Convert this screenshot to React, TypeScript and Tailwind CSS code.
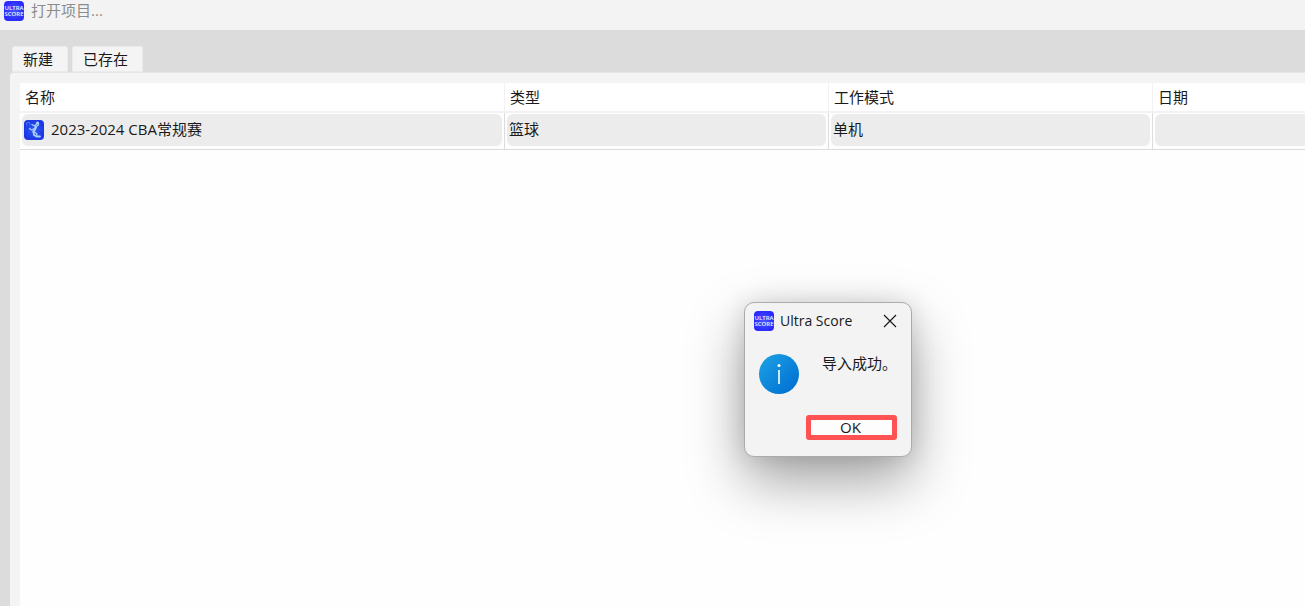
import React from 'react';

const columns = [
  { title: '名称', width: 'w-[485px]' },
  { title: '类型', width: 'w-[324px]' },
  { title: '工作模式', width: 'w-[324px]' },
  { title: '日期', width: '' },
];

const projects = [
  { name: '2023-2024 CBA常规赛', type: '篮球', mode: '单机', date: '' },
];

const AppLogo = () => (
  <svg viewBox="0 0 20 20" className="size-5 shrink-0" aria-hidden="true">
    <defs>
      <radialGradient id="logo-fill">
        <stop offset="0" stopColor="#4a55fa" />
        <stop offset="1" stopColor="#2b2bff" />
      </radialGradient>
    </defs>
    <rect width="20" height="20" rx="4" fill="url(#logo-fill)" />
    <g fill="#f1f2ff" fontFamily="Open Sans, sans-serif" fontWeight="600" fontSize="6" textAnchor="middle">
      <text x="10" y="9">ULTRA</text>
      <text x="10" y="15">SCORE</text>
    </g>
  </svg>
);

const BasketballIcon = () => (
  <svg viewBox="0 0 20 20" className="size-5 shrink-0" aria-hidden="true">
    <defs>
      <radialGradient id="ball-fill">
        <stop offset="0" stopColor="#2c5cf0" />
        <stop offset="1" stopColor="#1c38e4" />
      </radialGradient>
    </defs>
    <rect width="20" height="20" rx="4" fill="url(#ball-fill)" />
    <g fill="none" stroke="#a9cdfb" strokeLinecap="round" strokeLinejoin="round">
      <path d="M2.5 5V3L5 2l1 2.5" stroke="#5d86f6" strokeWidth="0.8" />
      <path d="m8 4.5 2.5 1.5 2-2" strokeWidth="1.2" />
      <path d="M12 6.5 11 9l-1.5 2.5" strokeWidth="2.4" />
      <path d="M10.5 8.5 7.5 10l-2-1.500" strokeWidth="1.2" />
      <path d="m9.5 12 .5 3 2.5 1.5H16" strokeWidth="1.8" />
      <path d="m10.5 12 2.5 2-.5 2" strokeWidth="1.2" />
      <path d="m13 6 1.5-1V3" strokeWidth="1.2" />
    </g>
    <circle cx="13.5" cy="3" r="1.6" fill="#a9cdfb" />
  </svg>
);

const InfoIcon = () => (
  <svg viewBox="0 0 40 40" className="size-10 shrink-0" aria-hidden="true">
    <defs>
      <linearGradient id="info-fill" x1="0" y1="0" x2="1" y2="1">
        <stop offset="0.1" stopColor="#1b9de2" />
        <stop offset="0.9" stopColor="#0071d3" />
      </linearGradient>
    </defs>
    <circle cx="20" cy="20" r="20" fill="url(#info-fill)" />
    <circle cx="20" cy="11.5" r="1.5" fill="#fff" />
    <path d="M20 16v14" stroke="#fff" strokeWidth="1.6" />
  </svg>
);

const TitleBar = () => (
  <header className="flex h-[30px] items-start gap-[7px] bg-[#f3f3f3] px-1 pt-px">
    <AppLogo />
    <h1 className="leading-[18px] text-[#8c8c8c]">打开项目...</h1>
  </header>
);

const Tabs = () => (
  <nav className="flex gap-1 px-3 pt-4" role="tablist">
    {['新建', '已存在'].map((label) => (
      <button
        key={label}
        type="button"
        role="tab"
        aria-selected={label === '已存在'}
        className="h-[26px] rounded-t-xs border border-[#ebebeb] bg-[#f4f4f4] pr-[14px] pl-[10px] leading-6"
      >
        {label}
      </button>
    ))}
  </nav>
);

const Cell = ({ children }: { children?: React.ReactNode }) => (
  <td className="group h-9 border-r border-b border-[#dcdcdc] px-[2px] pt-px pb-[3px] last:border-r-0 last:pr-0">
    <div className="flex h-8 items-center gap-[7px] rounded-md bg-[#ececec] px-[2px] pb-px group-last:rounded-r-none">
      {children}
    </div>
  </td>
);

const ProjectTable = () => (
  <table className="w-full table-fixed border-separate border-spacing-0">
    <thead>
      <tr>
        {columns.map((col) => (
          <th
            key={col.title}
            className={`${col.width} h-[30px] border-r border-b-2 border-[#f2f2f2] bg-white px-[5px] text-left font-normal last:border-r-0`}
          >
            {col.title}
          </th>
        ))}
      </tr>
    </thead>
    <tbody>
      {projects.map((project) => (
        <tr key={project.name}>
          <Cell>
            <BasketballIcon />
            {project.name}
          </Cell>
          <Cell>{project.type}</Cell>
          <Cell>{project.mode}</Cell>
          <Cell>{project.date}</Cell>
        </tr>
      ))}
    </tbody>
  </table>
);

const MessageBox = () => (
  <div
    role="dialog"
    aria-label="Ultra Score"
    className="absolute top-[302px] left-[744px] w-[168px] rounded-[10px] border border-[#ababab] bg-[#f3f3f3] shadow-[0_24px_56px_rgba(0,0,0,0.36),0_0_24px_rgba(0,0,0,0.12)]"
  >
    <div className="flex items-center gap-[6px] pt-2 pr-[14px] pl-[9px]">
      <AppLogo />
      <h2 className="flex-1 text-sm leading-5">Ultra Score</h2>
      <button type="button" aria-label="Close">
        <svg viewBox="0 0 14 14" className="size-[14px]" fill="none" stroke="#1a1a1a" strokeWidth="1.2">
          <path d="m1 1 12 12M13 1 1 13" />
        </svg>
      </button>
    </div>
    <div className="flex gap-[23px] pt-[23px] pl-[14px]">
      <InfoIcon />
      <p className="leading-[18px] whitespace-nowrap">导入成功。</p>
    </div>
    <div className="flex justify-end pt-[21px] pr-[14px] pb-4">
      <button
        type="button"
        className="flex h-[25px] w-[91px] items-center justify-center rounded-[3px] border-[5px] border-[#ff5252] bg-[#fdfdfd] pr-[2px] pb-[2px] leading-[18px]"
      >
        OK
      </button>
    </div>
  </div>
);

const App: React.FC = () => {
  return (
    <div className="relative flex min-h-screen flex-col overflow-hidden bg-[#dcdcdc] font-['Open_Sans','Noto_Sans_CJK_SC',sans-serif] text-[15px] text-[#1a1a1a]">
      <TitleBar />
      <Tabs />
      <main className="ml-[10px] flex flex-1 flex-col rounded-tl border-t border-[#e6e6e6] bg-[#f4f4f4] pt-[10px] pl-[10px]">
        <div className="flex-1 bg-[#fefefe]">
          <ProjectTable />
        </div>
      </main>
      <MessageBox />
    </div>
  );
};

export default App;
